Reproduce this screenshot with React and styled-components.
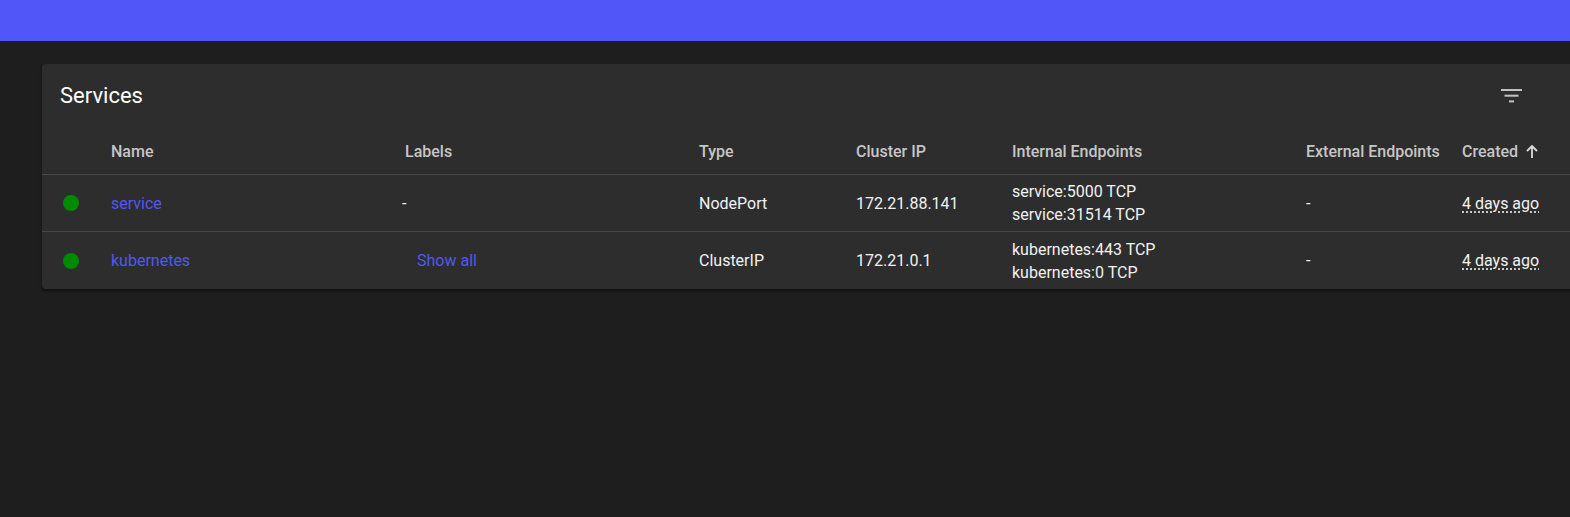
import React from 'react';
import styled, { createGlobalStyle } from 'styled-components';

const GlobalStyle = createGlobalStyle`
  html, body {
    margin: 0;
    padding: 0;
    background: #1e1e1e;
    overflow: hidden;
    font-family: Roboto, "Liberation Sans", sans-serif;
  }
`;

const COLUMNS = '69px 294px 294px 157px 156px 294px 156px 1fr';

const Page = styled.div`
  min-height: 517px;
  background: #1e1e1e;
`;

const TopBar = styled.div`
  height: 41px;
  background: #5156f9;
`;

const Main = styled.div`
  padding: 23px 0 0 42px;
`;

const Card = styled.div`
  width: 1540px;
  background: #2d2d2d;
  border-radius: 4px 0 0 4px;
  box-shadow: 0 2px 3px rgba(0, 0, 0, 0.45);
`;

const CardHeader = styled.div`
  height: 64px;
  display: flex;
  align-items: center;
  justify-content: space-between;
  padding: 0 59px 0 18px;
`;

const Title = styled.h2`
  margin: 0;
  font-size: 22px;
  font-weight: 400;
  color: #ffffff;
  padding-bottom: 2px;
`;

const FilterButton = styled.button`
  border: none;
  background: transparent;
  padding: 0;
  display: flex;
  cursor: pointer;
`;

const Row = styled.div`
  display: grid;
  grid-template-columns: ${COLUMNS};
  align-items: center;
  height: ${p => (p.$head ? '46px' : p.$last ? '57px' : '56px')};
  border-bottom: ${p => (p.$last ? 'none' : '1px solid #474747')};
  font-size: 16px;
  font-weight: ${p => (p.$head ? 500 : 400)};
  color: ${p => (p.$head ? '#c6c6c6' : '#f2f2f2')};
`;

const Cell = styled.div`
  display: flex;
  align-items: center;
  white-space: nowrap;
  margin-left: ${p => p.$shift || 0}px;
`;

const StatusDot = styled.span`
  width: 16px;
  height: 16px;
  border-radius: 50%;
  background: #008a00;
  margin-left: 21px;
`;

const NameLink = styled.a`
  color: #5158f0;
  text-decoration: none;
  cursor: pointer;
`;

const ShowAll = styled.button`
  border: none;
  background: transparent;
  color: #5158f0;
  font: inherit;
  padding: 0 12px;
  cursor: pointer;
`;

const Endpoints = styled.div`
  display: flex;
  flex-direction: column;
  line-height: 23px;
`;

const TimeAgo = styled.span`
  text-decoration: underline dotted;
  text-underline-offset: 3px;
`;

const SortArrow = styled.svg`
  margin-left: 8px;
`;

const services = [
  {
    name: 'service',
    labels: '-',
    type: 'NodePort',
    ip: '172.21.88.141',
    endpoints: ['service:5000 TCP', 'service:31514 TCP'],
    external: '-',
    created: '4 days ago'
  },
  {
    name: 'kubernetes',
    labels: null,
    type: 'ClusterIP',
    ip: '172.21.0.1',
    endpoints: ['kubernetes:443 TCP', 'kubernetes:0 TCP'],
    external: '-',
    created: '4 days ago'
  }
];

const FilterIcon = () => (
  <svg width="22" height="14" viewBox="0 0 22 14">
    <rect x="0" y="0" width="21" height="2" fill="#c2c2c2" />
    <rect x="3.5" y="5.7" width="14" height="2" fill="#c2c2c2" />
    <rect x="8" y="11.4" width="5" height="2" fill="#c2c2c2" />
  </svg>
);

export default function App() {
  return (
    <Page>
      <GlobalStyle />
      <TopBar />
      <Main>
        <Card>
          <CardHeader>
            <Title>Services</Title>
            <FilterButton>
              <FilterIcon />
            </FilterButton>
          </CardHeader>
          <Row $head>
            <Cell />
            <Cell>Name</Cell>
            <Cell>Labels</Cell>
            <Cell>Type</Cell>
            <Cell>Cluster IP</Cell>
            <Cell>Internal Endpoints</Cell>
            <Cell>External Endpoints</Cell>
            <Cell>
              Created
              <SortArrow width="12" height="13" viewBox="0 0 12 13">
                <path d="M6 1 L6 13 M1 6 L6 1 L11 6" stroke="#dcdcdc" strokeWidth="1.8" fill="none" />
              </SortArrow>
            </Cell>
          </Row>
          {services.map((s, i) => (
            <Row key={s.name} $last={i === services.length - 1}>
              <Cell>
                <StatusDot />
              </Cell>
              <Cell>
                <NameLink>{s.name}</NameLink>
              </Cell>
              <Cell $shift={s.labels ? -3 : 0}>
                {s.labels ? s.labels : <ShowAll>Show all</ShowAll>}
              </Cell>
              <Cell>{s.type}</Cell>
              <Cell>{s.ip}</Cell>
              <Cell>
                <Endpoints>
                  {s.endpoints.map(e => (
                    <span key={e}>{e}</span>
                  ))}
                </Endpoints>
              </Cell>
              <Cell>{s.external}</Cell>
              <Cell>
                <TimeAgo>{s.created}</TimeAgo>
              </Cell>
            </Row>
          ))}
        </Card>
      </Main>
    </Page>
  );
}
